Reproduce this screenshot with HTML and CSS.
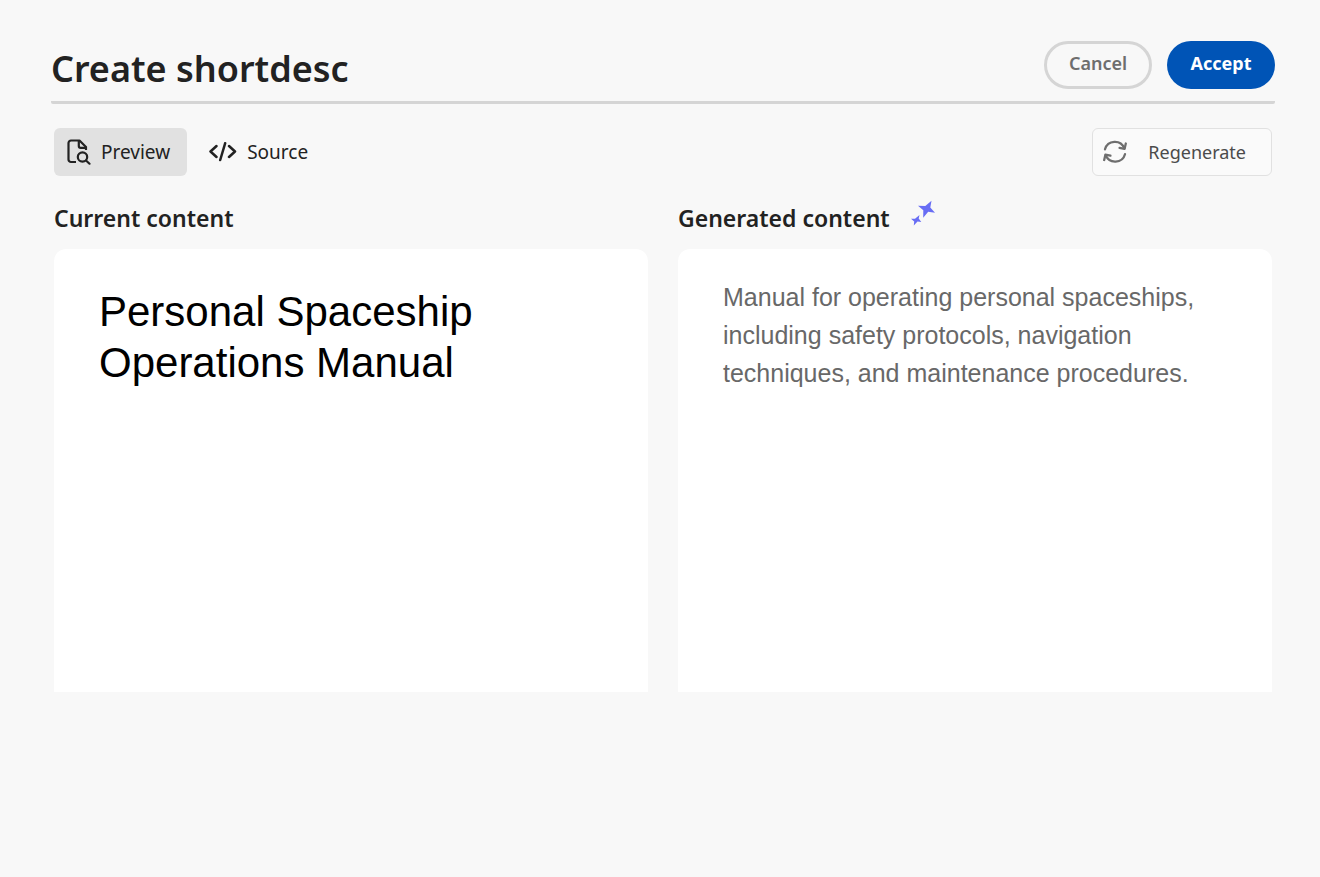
FILE: index.html
```html
<!DOCTYPE html>
<html lang="en">
<head>
<meta charset="utf-8">
<meta name="viewport" content="width=device-width, initial-scale=1">
<title>Create shortdesc</title>
<link rel="stylesheet" href="styles.css">
</head>
<body>
<main class="dialog">
  <header class="header">
    <h1 class="title">Create shortdesc</h1>
    <div class="actions">
      <button type="button" class="pill pill-outline">Cancel</button>
      <button type="button" class="pill pill-accent">Accept</button>
    </div>
  </header>
  <div class="content">
    <div class="toolbar">
      <div class="views">
        <button type="button" class="view view-active" aria-pressed="true">
          <svg class="icon" width="24" height="26" viewBox="0 0 24 26" fill="none" stroke="#222" stroke-width="2.200" stroke-linejoin="round" aria-hidden="true">
            <path d="M9 23H4a2.500 2.500 0 0 1-2.500-2.500V4A2.500 2.500 0 0 1 4 1.500h8.500L19 8v3"/>
            <path d="M11.800 1.800V7a1.800 1.800 0 0 0 1.800 1.800H19"/>
            <circle cx="15.500" cy="18" r="4.700"/>
            <path d="M19 21.500l3.500 3.200" stroke-linecap="round"/>
          </svg>
          Preview
        </button>
        <button type="button" class="view" aria-pressed="false">
          <svg class="icon" width="28" height="20" viewBox="0 0 28 20" fill="none" stroke="#222" stroke-width="2.500" stroke-linecap="round" stroke-linejoin="round" aria-hidden="true">
            <path d="M7.500 4L1.500 9.500 7.500 15M20 4L26 9.500 20 15M16.200 1.200l-5 16.800"/>
          </svg>
          Source
        </button>
      </div>
      <button type="button" class="regenerate">
        <svg class="icon" width="24" height="24" viewBox="0 0 24 24" fill="none" stroke="#6e6e6e" stroke-width="2.300" stroke-linecap="round" stroke-linejoin="round" aria-hidden="true">
          <path d="M2 9.300A10.200 10.200 0 0 1 21.300 8.300M22 14.200A10.200 10.200 0 0 1 2.700 15.200"/>
          <path d="M22.800 3.500L21.600 8.800 16.600 7.800M1.200 20L2.400 14.700 7.400 15.700"/>
        </svg>
        Regenerate
      </button>
    </div>
    <div class="columns">
      <section class="column">
        <h2 class="heading">Current content</h2>
        <div class="card">
          <p class="current">Personal Spaceship Operations Manual</p>
        </div>
      </section>
      <section class="column">
        <h2 class="heading">Generated content
          <svg class="spark" width="26" height="30" viewBox="0 0 26 30" fill="#686df4" aria-hidden="true">
            <path d="M21.500 2.700L20.300 9.500 25 14.800 18.200 13.700 13.200 19.800 13.300 12.200 8 7.800 15.300 8Z"/>
            <path d="M9.500 17L8.700 20.500 11.300 24 7.500 23.500 3.800 27.500 4.200 23.500 1 20.800 5 20.700Z"/>
          </svg>
        </h2>
        <div class="card">
          <p class="generated">Manual for operating personal spaceships, including safety protocols, navigation techniques, and maintenance procedures.</p>
        </div>
      </section>
    </div>
  </div>
</main>
</body>
</html>
```
FILE: styles.css
```css
* { box-sizing: border-box; }

body {
  margin: 0;
  background: #f8f8f8;
  color: #222;
  font-family: "Noto Sans", sans-serif;
}

button {
  font: inherit;
  color: inherit;
  border: 0;
  background: none;
  cursor: pointer;
}

.dialog { padding: 41px 45px 40px 51px; }

.header {
  display: flex;
  justify-content: space-between;
  align-items: flex-start;
  padding-bottom: 12px;
  border-bottom: 3px solid #d5d5d5;
  border-radius: 2px;
}

.title {
  margin: 0;
  padding-top: 8px;
  font-size: 36px;
  font-weight: 600;
  line-height: 40px;
}

.actions { display: flex; gap: 15px; }

.pill {
  min-width: 108px;
  height: 48px;
  padding: 0 20px 4px;
  border-radius: 24px;
  font-size: 18px;
  font-weight: 600;
}

.pill-outline {
  border: 3px solid #d5d5d5;
  color: #6e6e6e;
}

.pill-accent {
  background: #0054b6;
  color: #fff;
  font-weight: 700;
}

.content { padding: 24px 3px 0; }

.toolbar {
  display: flex;
  justify-content: space-between;
}

.views { display: flex; gap: 9px; }

.view,
.regenerate {
  display: flex;
  align-items: center;
  height: 48px;
  border-radius: 6px;
}

.view {
  gap: 10px;
  padding: 0 17px 0 13px;
  font-size: 19px;
}

.view-active { background: #e1e1e1; }

.icon { flex: none; }

.regenerate {
  gap: 21px;
  padding: 0 25px 0 10px;
  border: 1px solid #e1e1e1;
  background: #fafafa;
  color: #4b4b4b;
  font-size: 18px;
}

.columns {
  display: grid;
  grid-template-columns: 1fr 1fr;
  gap: 30px;
  padding-top: 22px;
}

.heading {
  display: flex;
  align-items: flex-start;
  gap: 20px;
  height: 40px;
  margin: 0 0 11px;
  font-size: 23px;
  font-weight: 600;
  line-height: 40px;
}

.card {
  min-height: 443px;
  padding: 29px 45px;
  border-radius: 12px 12px 0 0;
  background: #fff;
  font-family: "Liberation Sans", Arial, sans-serif;
}

.current {
  max-width: 440px;
  margin: 0;
  padding-top: 8px;
  color: #000;
  font-size: 42px;
  line-height: 51px;
}

.generated {
  margin: 0;
  color: #686868;
  font-size: 25px;
  line-height: 38px;
}
```
